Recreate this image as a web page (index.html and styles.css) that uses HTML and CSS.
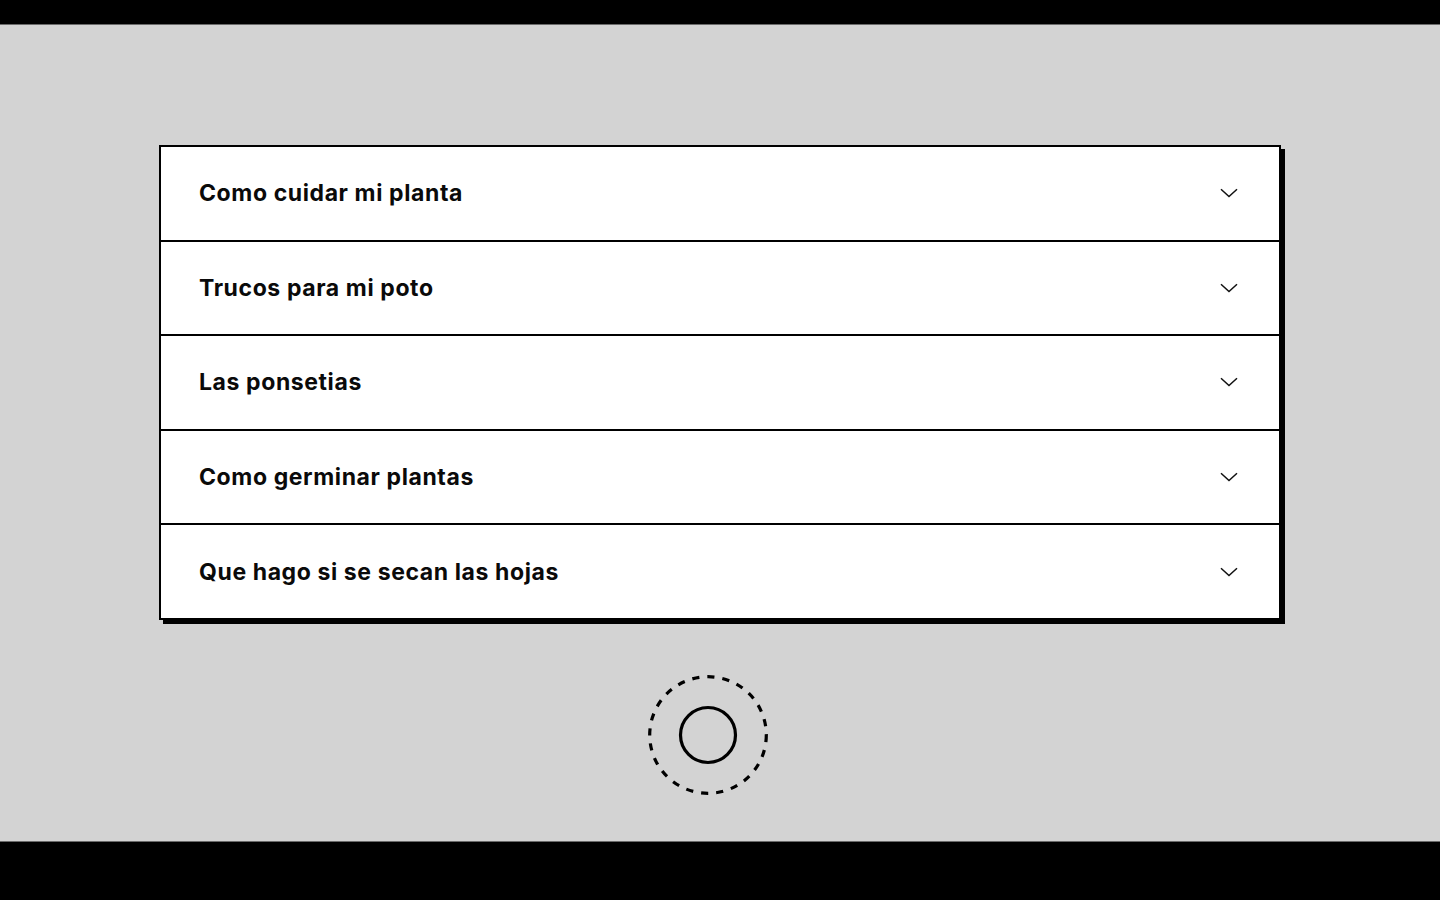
FILE: index.html
```html
<!DOCTYPE html>
<html>
<head>
  <title>Preguntas sobre plantas</title>
  <link rel="stylesheet" href="styles.css">
</head>
<body>
  <main class="stage">
    <div class="accordion">
      <div class="item">
        <span class="item-title">Como cuidar mi planta</span>
        <svg class="chevron" width="18" height="10" viewBox="0 0 18 10"><path d="M1 1.2 L9 8.6 L17 1.2" /></svg>
      </div>
      <div class="item">
        <span class="item-title">Trucos para mi poto</span>
        <svg class="chevron" width="18" height="10" viewBox="0 0 18 10"><path d="M1 1.2 L9 8.6 L17 1.2" /></svg>
      </div>
      <div class="item">
        <span class="item-title">Las ponsetias</span>
        <svg class="chevron" width="18" height="10" viewBox="0 0 18 10"><path d="M1 1.2 L9 8.6 L17 1.2" /></svg>
      </div>
      <div class="item">
        <span class="item-title">Como germinar plantas</span>
        <svg class="chevron" width="18" height="10" viewBox="0 0 18 10"><path d="M1 1.2 L9 8.6 L17 1.2" /></svg>
      </div>
      <div class="item">
        <span class="item-title">Que hago si se secan las hojas</span>
        <svg class="chevron" width="18" height="10" viewBox="0 0 18 10"><path d="M1 1.2 L9 8.6 L17 1.2" /></svg>
      </div>
    </div>

    <div class="controls">
      <svg class="record" width="120" height="120" viewBox="0 0 120 120">
        <circle class="ring" cx="60" cy="60" r="58.3" />
        <circle class="dot" cx="60" cy="60" r="27.5" />
      </svg>
    </div>
  </main>
</body>
</html>
```

FILE: styles.css
```css
body {
  margin: 0;
  padding: 0;
  background-color: #000;
  font-family: Inter, "Noto Sans", sans-serif;
}

.stage {
  margin-top: 24px;
  height: 818px;
  box-sizing: border-box;
  padding-top: 120px;
  background-color: #d3d3d3;
  border-top: 1px solid #6b6b6b;
  border-bottom: 1px solid #6b6b6b;
  display: flex;
  flex-direction: column;
  align-items: center;
}

.accordion {
  width: 1122px;
  height: 475px;
  box-sizing: border-box;
  background: #fff;
  border: 2px solid #000;
  box-shadow: 4px 4px 0 #000;
  display: flex;
  flex-direction: column;
}

.item {
  flex: 1;
  display: flex;
  align-items: center;
  justify-content: space-between;
  padding: 0 41px 0 38px;
}

.item + .item {
  border-top: 2px solid #000;
}

.item-title {
  font-size: 23px;
  font-weight: 700;
  color: #0a0a0a;
  letter-spacing: 0.6px;
}

.chevron path {
  fill: none;
  stroke: #111;
  stroke-width: 1.5;
}

.controls {
  margin-top: 55px;
  padding-right: 24px;
  display: flex;
  justify-content: center;
}

.record .ring {
  fill: none;
  stroke: #000;
  stroke-width: 3.2;
  stroke-dasharray: 7.2 8;
}

.record .dot {
  fill: none;
  stroke: #000;
  stroke-width: 3.2;
}
```
